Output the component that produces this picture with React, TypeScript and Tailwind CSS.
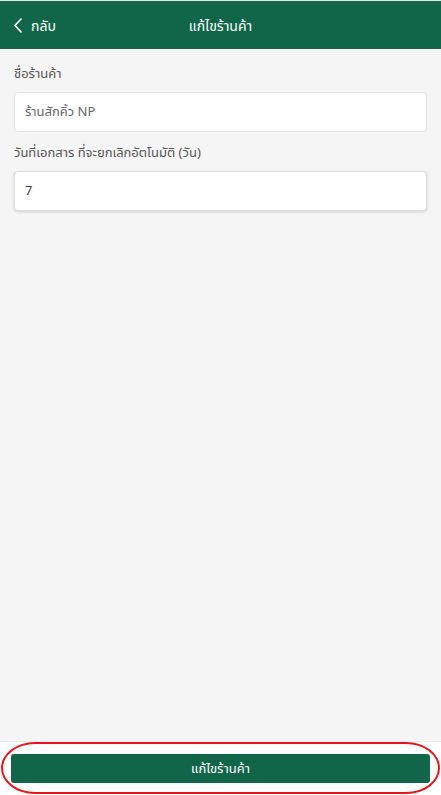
import React from 'react';

const font = { fontFamily: '"Noto Sans", "Noto Sans Thai", Tahoma, sans-serif' };

export default function App() {
  return (
    <div className="w-[441px] h-[795px] flex flex-col bg-[#f5f5f5] overflow-hidden" style={font}>
      {/* Header */}
      <div className="border-t border-[#e6e6e6] bg-[#116649] h-[49px] flex items-center relative text-white">
        <div className="flex items-center gap-[8px] pl-[13px]">
          <svg width="10" height="17" viewBox="0 0 10 17" fill="none">
            <path d="M8.5 1.5 L2 8.5 L8.5 15.5" stroke="white" strokeWidth="1.6" />
          </svg>
          <span className="text-[14px]">กลับ</span>
        </div>
        <div className="absolute inset-0 flex items-center justify-center pointer-events-none">
          <span className="text-[14px]">แก้ไขร้านค้า</span>
        </div>
      </div>

      {/* Form */}
      <div className="flex-1 flex flex-col px-[14px] pt-[15px]">
        <label className="h-[20px] flex items-center text-[13px] text-[#555]">ชื่อร้านค้า</label>
        <div className="mt-[8px] h-[40px] bg-white border border-[#e2e2e2] rounded-[4px] flex items-center px-[10px] text-[13px] text-[#666]">
          ร้านสักคิ้ว NP
        </div>
        <label className="mt-[11px] h-[20px] flex items-center text-[13px] text-[#555]">วันที่เอกสาร ที่จะยกเลิกอัตโนมัติ (วัน)</label>
        <div className="mt-[8px] h-[40px] bg-white border border-[#dcdcdc] rounded-[4px] shadow-[0_1px_3px_rgba(0,0,0,0.15)] flex items-center px-[10px] text-[13px] text-[#444]">
          7
        </div>
      </div>

      {/* Footer */}
      <div className="relative h-[54px] bg-white border-t border-[#ececec] flex items-center px-[11px]">
        <button className="w-full h-[29px] bg-[#116649] rounded-[3px] text-white text-[13px]">แก้ไขร้านค้า</button>
        <div className="absolute left-[1px] right-[1px] top-[0px] bottom-[1px] border-[2px] border-[#e8141b] rounded-[34px/26px] pointer-events-none" />
      </div>
    </div>
  );
}
